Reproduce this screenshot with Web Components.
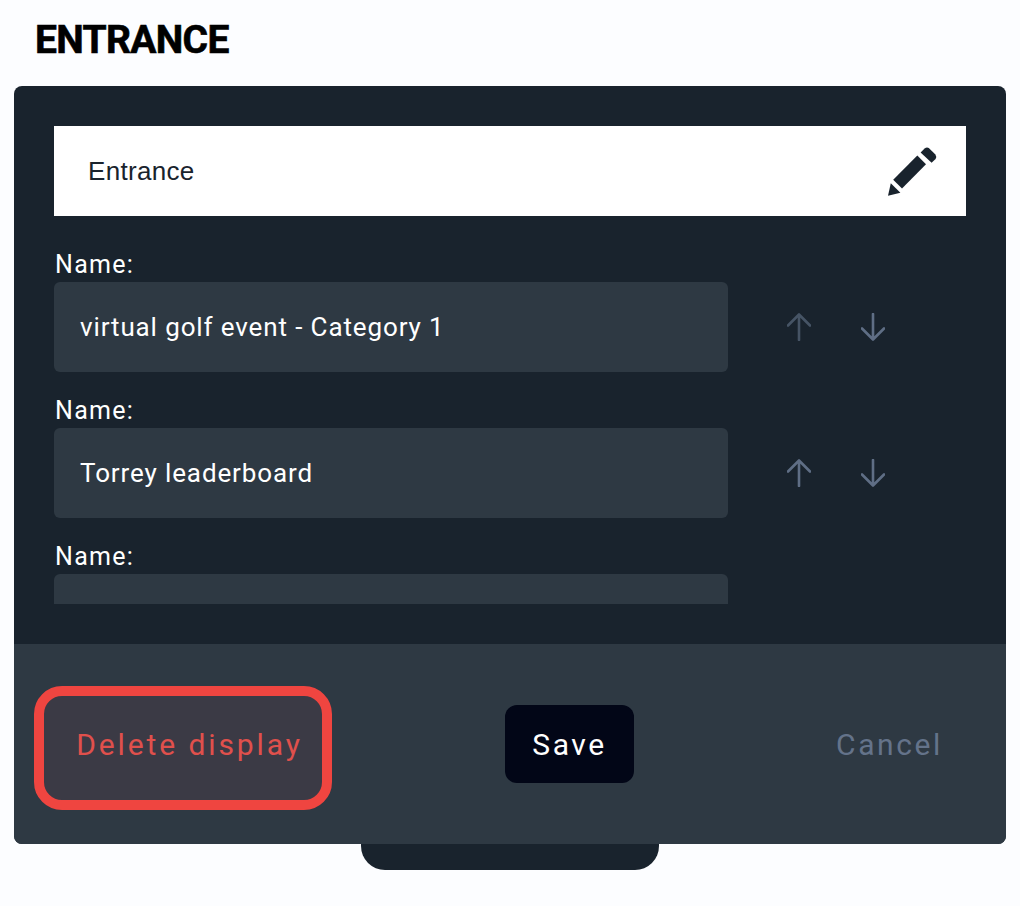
<!DOCTYPE html>
<html>
<head>
<meta charset="utf-8">
<title>Entrance</title>
<style>
    html, body { margin: 0; padding: 0; background: #fcfdff; }
    body { font-family: Roboto, "Liberation Sans", sans-serif; }
</style>
</head>
<body>
<display-editor heading="ENTRANCE">
    <title-field value="Entrance"></title-field>
    <name-row value="virtual golf event - Category 1" dim-up></name-row>
    <name-row value="Torrey leaderboard"></name-row>
    <name-row value=""></name-row>
</display-editor>

<script>
class DisplayEditor extends HTMLElement {
    constructor() {
        super();
        this.attachShadow({ mode: 'open' });
    }

    connectedCallback() {
        const heading = this.getAttribute('heading') || '';
        this.shadowRoot.innerHTML = `
            <style>
                :host { display: block; width: 1020px; height: 906px; padding: 0 14px; box-sizing: border-box; overflow: hidden; }
                h1 {
                    margin: 0;
                    height: 86px;
                    padding: 19px 0 0 21px;
                    box-sizing: border-box;
                    font: 700 39px/42px Roboto, sans-serif;
                    letter-spacing: -0.7px;
                    -webkit-text-stroke: 0.6px #000;
                    color: #000;
                }
                .panel { border-radius: 8px; overflow: hidden; background: #19232d; }
                .body { padding: 40px; }
                .list { height: 478px; overflow: hidden; }
                .foot {
                    height: 200px;
                    background: #2e3943;
                    display: flex;
                    align-items: center;
                    justify-content: space-between;
                    padding: 0 34px 0 20px;
                    box-sizing: border-box;
                }
                .tab {
                    width: 298px;
                    height: 26px;
                    margin: 0 auto;
                    background: #19232d;
                    border-radius: 0 0 24px 24px;
                }
            </style>
            <h1>${heading}</h1>
            <div class="panel">
                <div class="body">
                    <div class="list"><slot></slot></div>
                </div>
                <div class="foot">
                    <action-button kind="delete">Delete display</action-button>
                    <action-button kind="save">Save</action-button>
                    <action-button kind="cancel">Cancel</action-button>
                </div>
            </div>
            <div class="tab"></div>
        `;
    }
}

class TitleField extends HTMLElement {
    constructor() {
        super();
        this.attachShadow({ mode: 'open' });
    }

    connectedCallback() {
        this.shadowRoot.innerHTML = `
            <style>
                :host {
                    display: flex;
                    align-items: center;
                    justify-content: space-between;
                    height: 90px;
                    margin-bottom: 36px;
                    padding: 0 29px 0 34px;
                    background: #fff;
                    color: #19232d;
                    font: 26px "Liberation Sans", Arial, sans-serif;
                    letter-spacing: 0.3px;
                }
                svg { display: block; width: 49px; height: 49px; margin-top: 1px; }
            </style>
            <span>${this.getAttribute('value') || ''}</span>
            <svg viewBox="888 146 49 49" fill="#19232d">
                <path d="M888 194.8 L890.8 182.2 L900.4 191.8 Z"/>
                <path d="M893.2 178.8 L917.3 154.6 L926 163.3 L902 187.6 Z"/>
                <path d="M920.6 151.6 L924.6 147.6 Q926.6 146 928.8 147 L935.4 153.4 Q937 155.6 935.6 158 L931.6 161.8 Z"/>
            </svg>
        `;
    }
}

class NameRow extends HTMLElement {
    constructor() {
        super();
        this.attachShadow({ mode: 'open' });
    }

    connectedCallback() {
        const value = this.getAttribute('value') || '';
        const hasValue = value !== '';
        const upColor = this.hasAttribute('dim-up') ? '#465465' : '#5f6e85';
        this.shadowRoot.innerHTML = `
            <style>
                :host { display: block; height: 146px; color: #fff; font-family: Roboto, sans-serif; }
                label { display: block; height: 30px; font-size: 25px; line-height: 26px; padding-left: 1px; letter-spacing: 1.3px; }
                .line { display: flex; align-items: center; }
                .input {
                    width: 674px;
                    height: 90px;
                    box-sizing: border-box;
                    padding-left: 26px;
                    display: flex;
                    align-items: center;
                    background: #2e3943;
                    border-radius: 6px;
                    font-size: 26px;
                    letter-spacing: 0.88px;
                }
                .arrows { display: flex; gap: 50px; margin-left: 59px; }
                svg { display: block; width: 24px; height: 28px; fill: none; stroke-width: 2.6; stroke-linecap: round; stroke-linejoin: round; }
            </style>
            <label>Name:</label>
            <div class="line">
                <div class="input">${value}</div>
                ${hasValue ? `
                <div class="arrows">
                    <svg viewBox="0 0 24 28" stroke="${upColor}"><path d="M12 27V2M1 12.5L12 1.5L23 12.5"/></svg>
                    <svg viewBox="0 0 24 28" stroke="#5f6e85"><path d="M12 1V26M1 15.5L12 26.5L23 15.5"/></svg>
                </div>` : ''}
            </div>
        `;
    }
}

class ActionButton extends HTMLElement {
    constructor() {
        super();
        this.attachShadow({ mode: 'open' });
    }

    connectedCallback() {
        this.shadowRoot.innerHTML = `
            <style>
                :host {
                    display: flex;
                    align-items: center;
                    justify-content: center;
                    box-sizing: border-box;
                    font: 30px Roboto, sans-serif;
                    letter-spacing: 2.6px;
                }
                :host([kind="delete"]) {
                    width: 298px;
                    height: 124px;
                    margin-top: 8px;
                    padding: 0 0 8px 13px;
                    border: 10px solid #ef4540;
                    border-radius: 28px;
                    background: #3b3a45;
                    color: #e0504c;
                    letter-spacing: 2.9px;
                }
                :host([kind="save"]) {
                    width: 129px;
                    height: 78px;
                    border-radius: 12px;
                    background: #020617;
                    color: #fff;
                }
                :host([kind="cancel"]) {
                    width: 165px;
                    height: 78px;
                    color: #64738a;
                }
            </style>
            <slot></slot>
        `;
    }
}

customElements.define('display-editor', DisplayEditor);
customElements.define('title-field', TitleField);
customElements.define('name-row', NameRow);
customElements.define('action-button', ActionButton);
</script>
</body>
</html>
